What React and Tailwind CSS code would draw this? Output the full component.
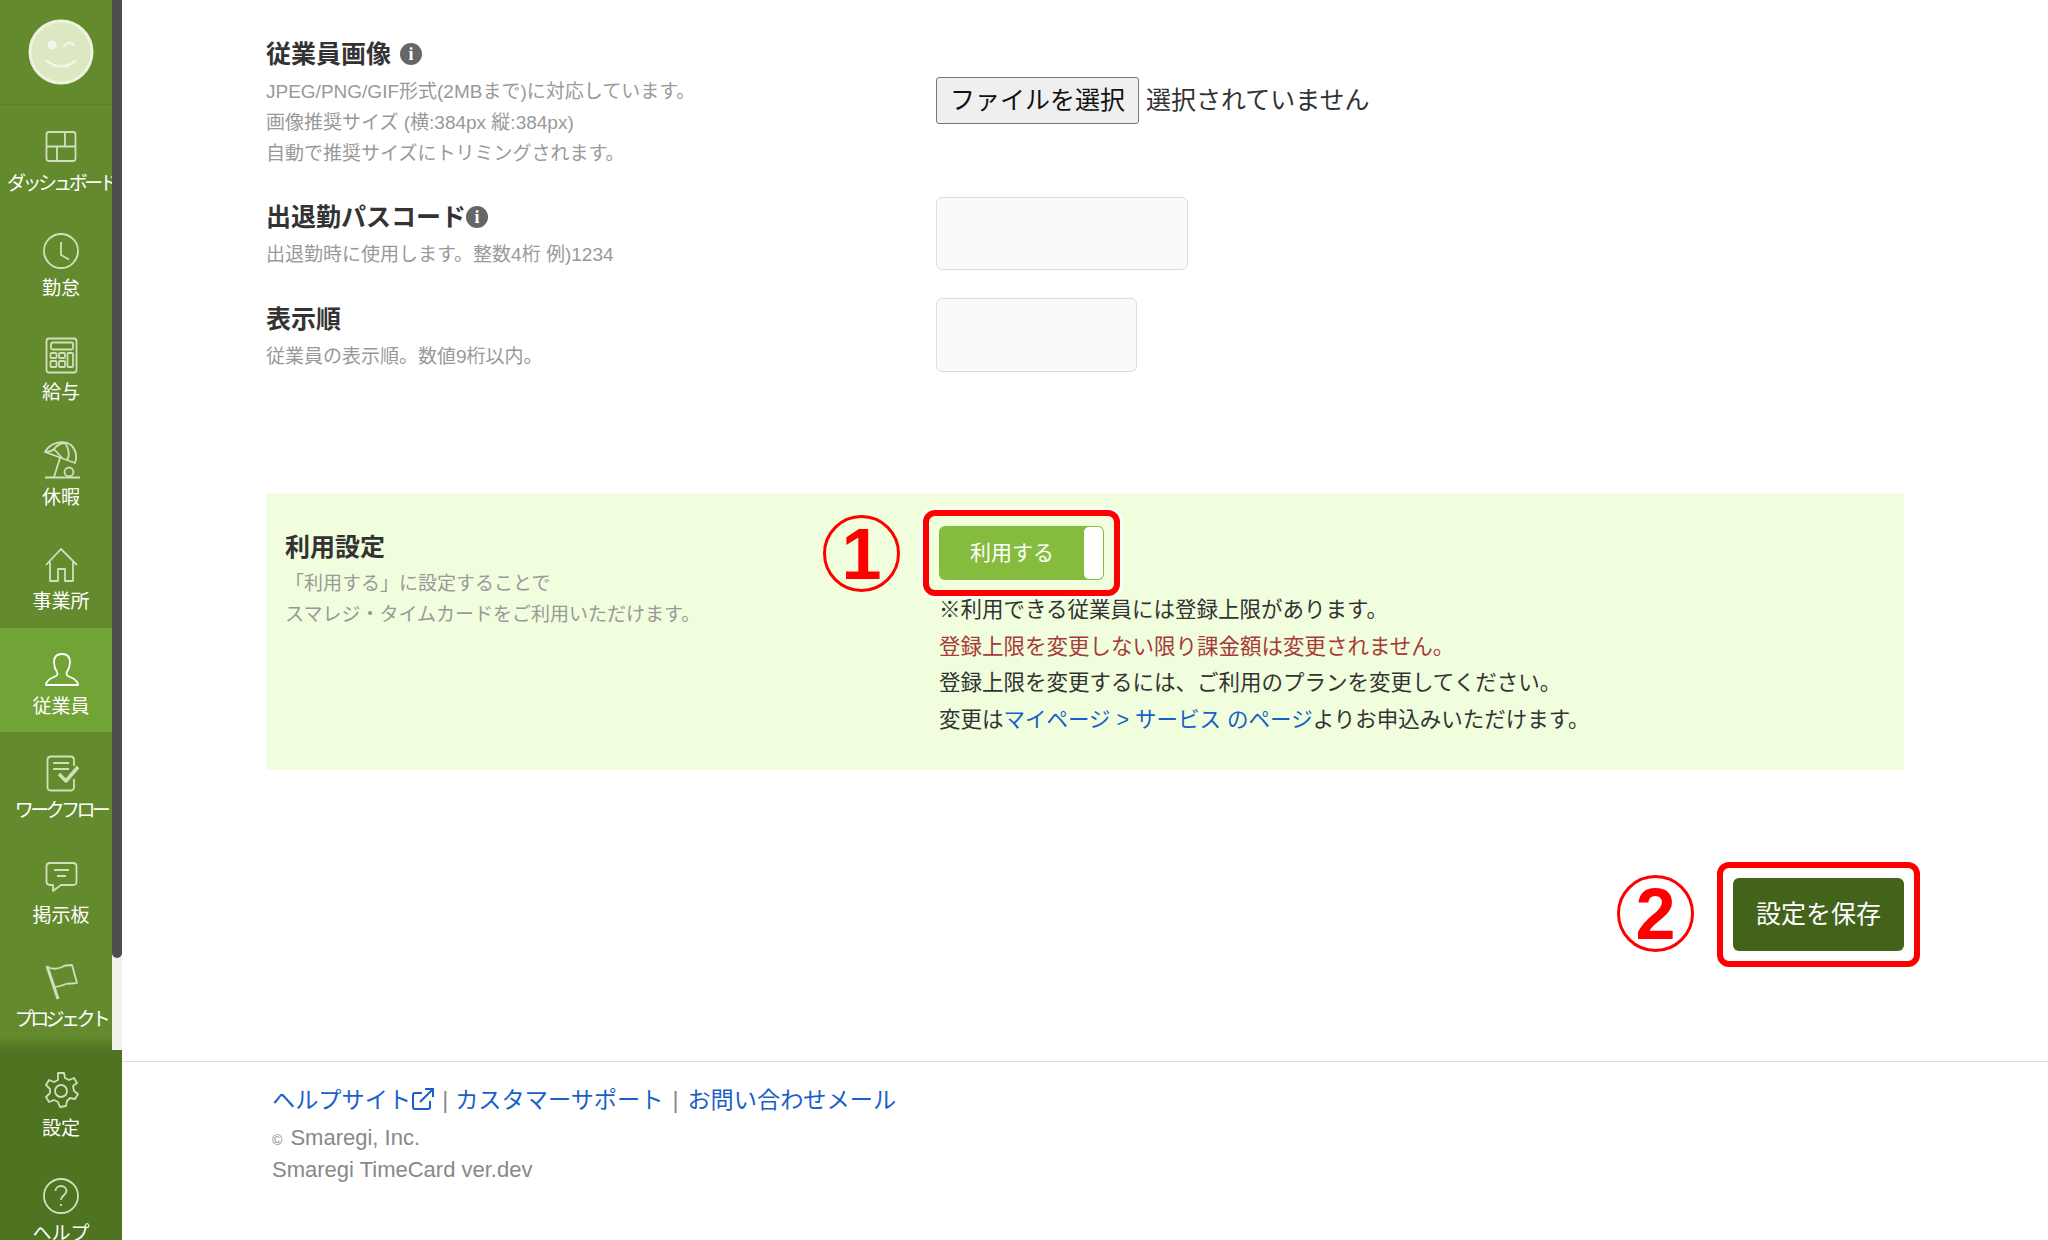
const FONT = "font-['Liberation_Sans','Noto_Sans_CJK_JP',sans-serif]"

const icons = {
  dashboard: (
    <>
      <rect x="5.5" y="6" width="29" height="29" rx="2.5" />
      <path d="M5.5 20.5h29M24 6v14.5M16 20.5V35" />
    </>
  ),
  clock: (
    <>
      <circle cx="20" cy="20" r="17" />
      <path d="M20 11v13l8 4.5" />
    </>
  ),
  calc: (
    <>
      <rect x="5.5" y="3.5" width="30" height="34" rx="2.5" />
      <rect x="10" y="7.5" width="22" height="7" rx="1.5" />
      <rect x="9.5" y="18" width="6" height="5" rx="1" />
      <rect x="18" y="18" width="6" height="5" rx="1" />
      <rect x="9.5" y="26" width="6" height="6" rx="1" />
      <rect x="18" y="26" width="6" height="6" rx="1" />
      <rect x="26.5" y="18" width="5.5" height="14" rx="1" />
    </>
  ),
  vacation: (
    <>
      <path d="M4 12C9 3 22 -1 30 5c5 5 6 12 4 18L4 12Z" />
      <path d="M13 9c-2 2-5 3-9 3M13 9c3-4 7-6 11-6M13 9l8 9M24 3c4 5 5 13 2 17" />
      <path d="M19 18l-6 19M4 37.5h35" />
      <circle cx="28" cy="32" r="4.5" />
    </>
  ),
  home: <path d="M5 21 20 5l16 16M9 18v19h8V25h7v12h8V18" />,
  user: (
    <path d="M5 36c0-4 3-6 8-8 4-1.500 4-3.500 3-5-2-3-3-6-3-10 0-5 3-8 8-8s8 3 8 8c0 4-1 7-3 10-1 1.500-1 3.500 3 5 5 2 8 4 8 8H5Z" />
  ),
  workflow: (
    <>
      <path d="M33 13V7c0-2-1.500-3.500-3.500-3.500H10C8 3.500 6.500 5 6.500 7v27c0 2 1.500 3.500 3.500 3.500h19.500c2 0 3.500-1.500 3.500-3.500v-8" />
      <path d="M12 10h16M12 16h16" />
      <path d="M18 21l7 7 12-14" strokeWidth="3.500" />
    </>
  ),
  board: (
    <>
      <path d="M9 5h23c2 0 3.500 1.500 3.500 3.500v15c0 2-1.500 3.500-3.500 3.500H20l-8 6v-6H9c-2 0-3.500-1.500-3.500-3.500v-15C5.500 6.500 7 5 9 5Z" />
      <path d="M13 12h15M16 18h9" />
    </>
  ),
  flag: (
    <>
      <path d="M6 4l11 33" strokeWidth="3" />
      <path d="M6 5c7 3 11 2 15 0 3-2 7-2 10-2l5 18c-4 1-7 0-11 1-3 1-6 3-13 3" />
    </>
  ),
  gear: (
    <>
      <circle cx="20" cy="20" r="6" />
      <path d="M17 2h6l1 5 4 2 5-2 3 5-4 3 1 5 4 3-3 5-5-1-3 3-1 5-6 1-2-5-4-2-5 2-3-5 4-4v-4l-4-4 3-5 5 2 4-2Z" />
    </>
  ),
  help: (
    <>
      <circle cx="20" cy="20" r="17" />
      <path d="M14.500 15c0-3 2.500-5 5.500-5s5.500 2 5.500 5c0 4-5.500 4-5.500 9" />
      <path d="M20 28v2" />
    </>
  ),
}

const navItems = [
  { icon: 'dashboard', label: 'ダッシュボード', cls: 'tracking-[-3.6px]' },
  { icon: 'clock', label: '勤怠' },
  { icon: 'calc', label: '給与' },
  { icon: 'vacation', label: '休暇' },
  { icon: 'home', label: '事業所' },
  { icon: 'user', label: '従業員', active: true },
  { icon: 'workflow', label: 'ワークフロー', cls: 'tracking-[-3.6px]' },
  { icon: 'board', label: '掲示板' },
  { icon: 'flag', label: 'プロジェクト', cls: 'tracking-[-3.6px]' },
]

function NavItem({ icon, label, active, cls = '' }) {
  return (
    <div className={`flex h-[104.5px] shrink-0 flex-col items-center pt-[21px] ${active ? 'bg-[#71a336]' : ''}`}>
      <svg
        width="40"
        height="40"
        viewBox="0 0 40 40"
        fill="none"
        stroke="currentColor"
        strokeWidth="1.800"
        strokeLinejoin="round"
        className={active ? 'text-white' : 'text-[#d2dfbd]'}
      >
        {icons[icon]}
      </svg>
      <div className={`mt-[6px] whitespace-nowrap text-[19px] leading-[24px] text-white ${cls}`}>{label}</div>
    </div>
  )
}

function Sidebar() {
  return (
    <aside className="relative flex h-full w-[122px] shrink-0 flex-col overflow-hidden">
      <div className="relative h-[1050px] shrink-0 overflow-hidden bg-[#648a2e]">
        <div className="flex h-[105px] items-center justify-center border-b border-[#5b8228]">
          <svg width="66" height="66" viewBox="0 0 66 66">
            <circle cx="33" cy="33" r="31" fill="#dce8c2" stroke="#edf3de" strokeWidth="3" />
            <circle cx="24" cy="26" r="4.500" fill="#f2f6e8" />
            <path d="M36 27c3-4 7-4 10-1" fill="none" stroke="#f2f6e8" strokeWidth="2.500" strokeLinecap="round" />
            <path d="M19 42c8 7 20 7 28 0" fill="none" stroke="#f2f6e8" strokeWidth="2.500" strokeLinecap="round" />
          </svg>
        </div>
        {navItems.map((item) => (
          <NavItem key={item.label} {...item} />
        ))}
        <div className="absolute inset-x-0 bottom-0 h-[14px] bg-gradient-to-b from-transparent to-[#507520]" />
        <div className="absolute inset-y-0 right-0 w-[10px] bg-[#eff3ea]">
          <div className="h-[958px] rounded-b-[5px] bg-[#4c4d4a]" />
        </div>
      </div>
      <div className="flex-1 bg-[#4e7321]">
        <NavItem icon="gear" label="設定" />
        <NavItem icon="help" label="ヘルプ" />
      </div>
    </aside>
  )
}

function InfoIcon() {
  return (
    <span className="flex h-[22px] w-[22px] items-center justify-center rounded-full bg-[#666] font-['Liberation_Serif',serif] text-[18px] font-bold leading-none text-white">
      i
    </span>
  )
}

function Label({ title, info, gap = 'ml-0', children }) {
  return (
    <div className="w-[670px] shrink-0">
      <div className="flex h-[30px] items-center text-[25px] font-bold leading-[30px] text-[#333]">
        {title}
        {info && (
          <span className={gap}>
            <InfoIcon />
          </span>
        )}
      </div>
      <div className="mt-[7px] text-[19px] leading-[31px] text-[#999]">{children}</div>
    </div>
  )
}

function Ring({ className }) {
  return (
    <div
      className={`pointer-events-none absolute rounded-[12px] border-[6px] border-[#ff0000] shadow-[0_0_0_3px_rgba(255,255,255,0.8)] ${className}`}
    />
  )
}

function Badge({ n, className }) {
  return (
    <div
      className={`absolute flex h-[77px] w-[77px] items-center justify-center rounded-full border-[3px] border-[#ff0000] text-[72px] font-bold leading-none text-[#ff0000] ${className}`}
    >
      {n}
    </div>
  )
}

function Toggle() {
  return (
    <div className="relative flex h-[54px] w-[165px] items-center rounded-[6px] bg-[#86bc3e] p-px">
      <span className="w-[146px] pl-[2px] pr-[2px] text-center text-[21px] text-white">利用する</span>
      <span className="ml-auto h-full w-[19px] rounded-[5px] bg-white" />
      <Ring className="-inset-x-[16px] -inset-y-[16px]" />
      <Badge n="1" className="-left-[116px] -top-[11px]" />
    </div>
  )
}

function Main() {
  return (
    <main className="flex min-w-0 flex-1 flex-col">
      <div className="h-[1061px] shrink-0 pl-[144px] pr-[144px] pt-[39px]">
        <div className="flex">
          <Label title="従業員画像" info gap="ml-[9px]">
            JPEG/PNG/GIF形式(2MBまで)に対応しています。
            <br />
            画像推奨サイズ (横:384px 縦:384px)
            <br />
            自動で推奨サイズにトリミングされます。
          </Label>
          <div className="mt-[38px] flex h-[47px] items-center text-[25px] text-[#333]">
            <span className="flex h-[47px] w-[203px] items-center justify-center rounded-[3px] border border-[#767676] bg-[#efefef] text-[#111]">
              ファイルを選択
            </span>
            <span className="ml-[7px]">選択されていません</span>
          </div>
        </div>

        <div className="mt-[33px] flex">
          <Label title="出退勤パスコード" info>
            出退勤時に使用します。整数4桁 例)1234
          </Label>
          <div className="mt-[-5px] h-[73px] w-[252px] rounded-[6px] border border-[#dddddd] bg-[#fafafa]" />
        </div>

        <div className="mt-[34px] flex">
          <Label title="表示順">従業員の表示順。数値9桁以内。</Label>
          <div className="mt-[-6px] h-[74px] w-[201px] rounded-[6px] border border-[#dddddd] bg-[#fafafa]" />
        </div>

        <section className="mt-[121px] flex h-[277px] bg-[#f0fedd] pl-[19px]">
          <div className="w-[654px] shrink-0 pt-[39px]">
            <div className="text-[25px] font-bold leading-[30px] text-[#333]">利用設定</div>
            <div className="mt-[6px] text-[19px] leading-[31px] text-[#999]">
              「利用する」に設定することで
              <br />
              スマレジ・タイムカードをご利用いただけます。
            </div>
          </div>
          <div className="pt-[33px]">
            <Toggle />
            <div className="mt-[12px] whitespace-nowrap text-[21.500px] leading-[36.500px] text-[#333]">
              <div>※利用できる従業員には登録上限があります。</div>
              <div className="text-[#a83a3a]">登録上限を変更しない限り課金額は変更されません。</div>
              <div>登録上限を変更するには、ご利用のプランを変更してください。</div>
              <div>
                変更は<span className="text-[#1a5fc8]">マイページ &gt; サービス のページ</span>よりお申込みいただけます。
              </div>
            </div>
          </div>
        </section>

        <div className="mt-[108px] flex justify-end">
          <div className="relative flex h-[73px] w-[171px] items-center justify-center rounded-[6px] bg-[#43621a] text-[25px] text-white">
            設定を保存
            <Ring className="-inset-x-[16px] -inset-y-[16px]" />
            <Badge n="2" className="-left-[116px] -top-[3px]" />
          </div>
        </div>
      </div>

      <footer className="flex-1 border-t border-[#dddddd] pl-[150px] pt-[22px]">
        <div className="flex items-center text-[23.200px] leading-[32px] text-[#1a5fc8]">
          ヘルプサイト
          <svg width="24" height="24" viewBox="0 0 24 24" fill="none" stroke="currentColor" strokeWidth="2" className="mb-[3px]">
            <path d="M19 14v6a2 2 0 0 1-2 2H4a2 2 0 0 1-2-2V8a2 2 0 0 1 2-2h7" />
            <path d="M9 15 21 3M14 2h8v8" />
          </svg>
          <span className="mx-[7px] text-[#888]">|</span>
          カスタマーサポート
          <span className="mx-[9px] text-[#888]">|</span>
          お問い合わせメール
        </div>
        <div className="mt-[7px] text-[22px] leading-[29px] text-[#888]">
          <span className="mr-[2px] text-[14px]">©</span> Smaregi, Inc.
          <br />
          Smaregi TimeCard ver.dev
        </div>
      </footer>
    </main>
  )
}

export default function App() {
  return (
    <div className={`flex h-[1240px] w-[2048px] overflow-hidden bg-white ${FONT}`}>
      <Sidebar />
      <Main />
    </div>
  )
}
